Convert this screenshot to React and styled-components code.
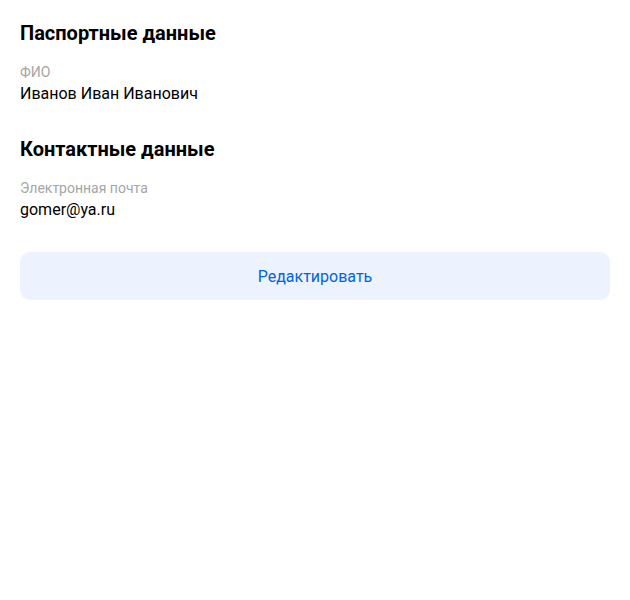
import React from 'react';
import styled, { createGlobalStyle } from 'styled-components';

const GlobalStyle = createGlobalStyle`
    body {
        margin: 0;
        background: #fff;
        font-family: Roboto, "Noto Sans", Arial, sans-serif;
        color: #000;
    }
`;

const Page = styled.div`
    padding: 21px 20px;
    display: flex;
    flex-direction: column;
`;

const Section = styled.section`
    display: flex;
    flex-direction: column;
    margin-bottom: 33px;
`;

const Title = styled.h2`
    margin: 0 0 19px;
    font-size: 20px;
    line-height: 24px;
    font-weight: 700;
`;

const Label = styled.div`
    font-size: 14px;
    line-height: 16px;
    color: #a5a5a5;
    margin-bottom: 4px;
`;

const Value = styled.div`
    font-size: 16px;
    line-height: 20px;
`;

const EditButton = styled.button`
    height: 48px;
    border: none;
    border-radius: 10px;
    background: #ecf3fe;
    color: #0064e0;
    font-family: inherit;
    font-size: 16px;
    cursor: pointer;
    margin-top: -1px;
`;

const sections = [
    { title: 'Паспортные данные', label: 'ФИО', value: 'Иванов Иван Иванович' },
    { title: 'Контактные данные', label: 'Электронная почта', value: 'gomer@ya.ru' },
];

export default function App() {
    return (
        <>
            <GlobalStyle />
            <Page>
                {sections.map((s, i) => (
                    <Section key={i}>
                        <Title>{s.title}</Title>
                        <Label>{s.label}</Label>
                        <Value>{s.value}</Value>
                    </Section>
                ))}
                <EditButton>Редактировать</EditButton>
            </Page>
        </>
    );
}
